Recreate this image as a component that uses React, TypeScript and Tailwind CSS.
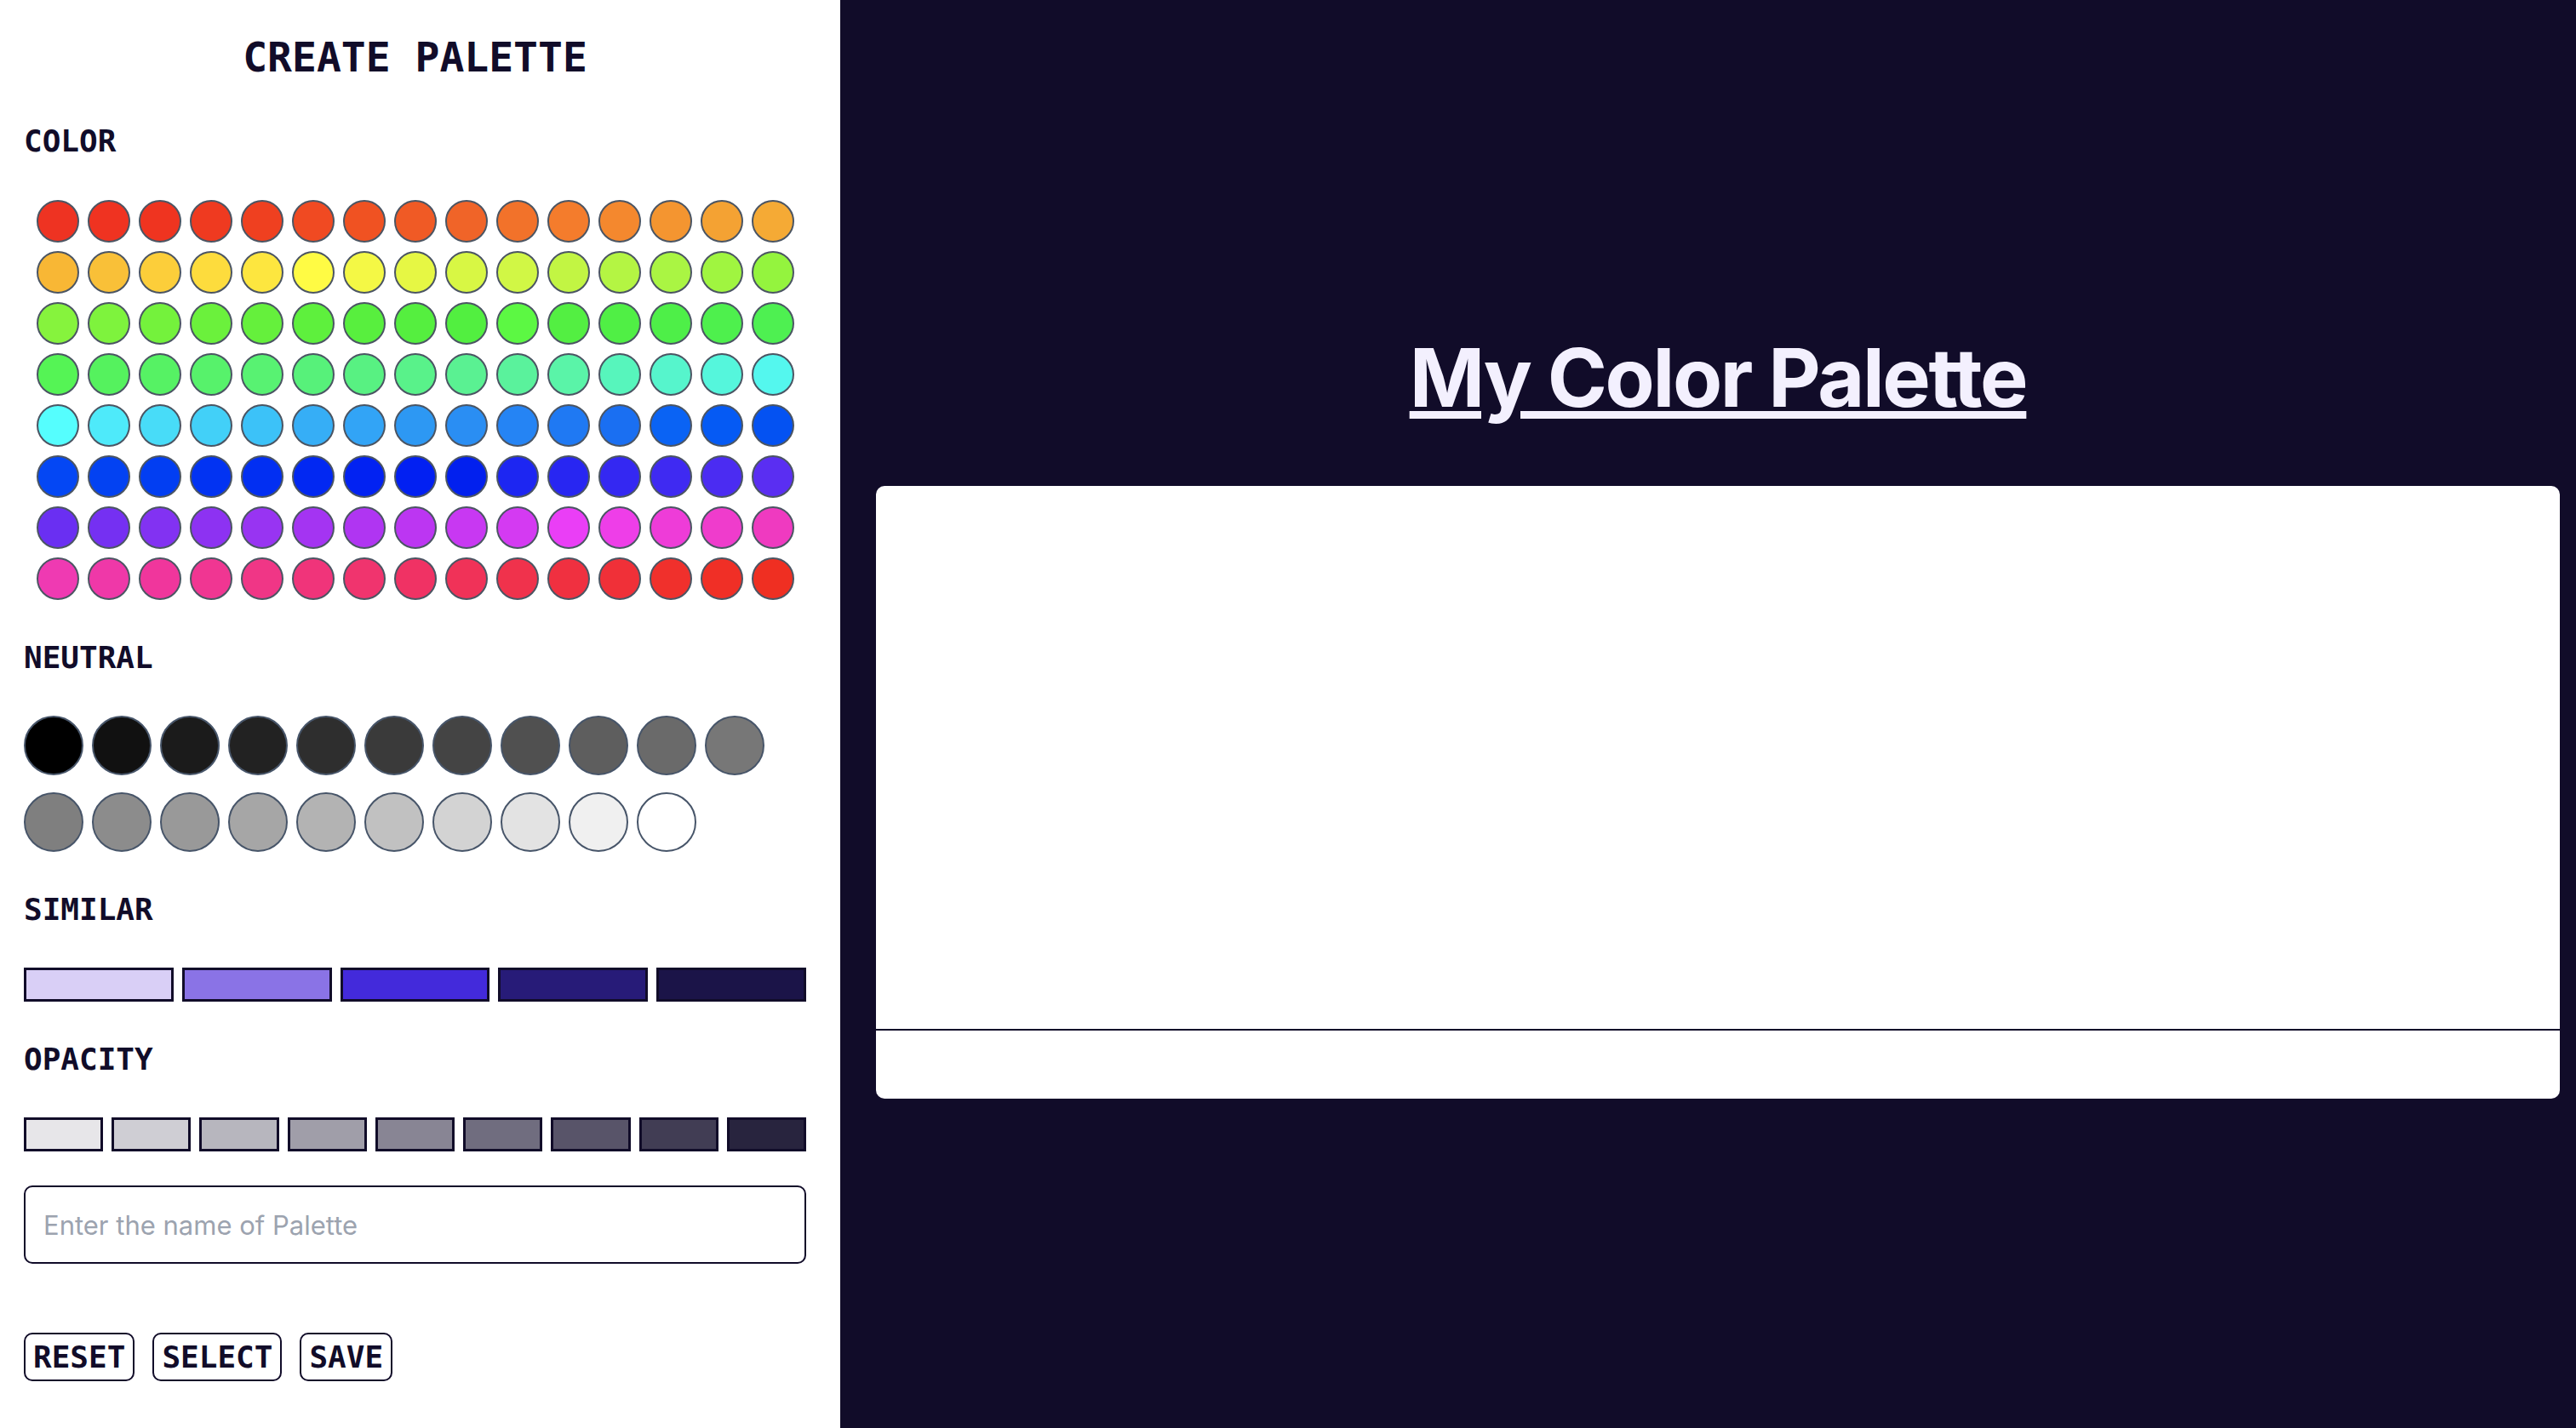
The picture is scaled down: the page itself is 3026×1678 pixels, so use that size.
const hues = [
  "#ee3322", "#ef3321", "#ef3420", "#ef3a20", "#ef4020", "#f04a22", "#f05222", "#f05a25", "#f06428", "#f2722a", "#f47c2c", "#f4882e", "#f49530", "#f4a233", "#f5aa35",
  "#f8b735", "#f9c038", "#fcce3a", "#fddc3d", "#fde63f", "#fffb44", "#f4f845", "#e6f744", "#d8f744", "#d1f745", "#c2f543", "#b4f543", "#aaf543", "#a0f540", "#94f43e",
  "#86f33d", "#7ef33d", "#74f23c", "#6bf13c", "#65f03c", "#5ef03d", "#58ef3e", "#55ef3f", "#52ef40", "#5cf843", "#53ef42", "#50ef45", "#4eef48", "#4ef04d", "#4ef051",
  "#55f455", "#55f25e", "#56f264", "#57f26b", "#58f272", "#57f17a", "#58f182", "#59f28a", "#5af192", "#5af29c", "#5af4a8", "#57f5bc", "#56f5cc", "#55f6dc", "#54f7ee",
  "#55fefe", "#4eeafa", "#48dcf8", "#42d0f8", "#3cc2f8", "#36aef6", "#32a4f6", "#2d98f3", "#2a8ef3", "#2584f4", "#1f79f3", "#1a6ff2", "#0a63f4", "#055af4", "#0452f2",
  "#0447f4", "#0342f2", "#023ef2", "#0233f2", "#022ff2", "#0228f2", "#0222f2", "#0220f2", "#0220ee", "#1d26f2", "#2826f2", "#3428f2", "#3f2af2", "#4b2cf2", "#5a2ef2",
  "#6a2ff2", "#7530f2", "#8232f2", "#8d32f2", "#9834f2", "#a434f2", "#b035f2", "#bc36f2", "#c838f2", "#d43af2", "#ea3ef6", "#ee3ee8", "#ee3cd8", "#ef3ccc", "#ef3ac0",
  "#ef3ab2", "#ef38a8", "#f0369c", "#f03692", "#f03686", "#f0347a", "#f0346e", "#f03264", "#f03258", "#f0324c", "#f03040", "#f03038", "#f0302c", "#f02f26", "#ef2f22",
];

const neutrals = [
  "#000000", "#111111", "#1b1b1b", "#222222", "#2e2e2e", "#3a3a3a", "#444444", "#505050", "#5e5e5e", "#6a6a6a", "#777777",
  "#7f7f7f", "#8c8c8c", "#999999", "#a6a6a6", "#b3b3b3", "#c1c1c1", "#d3d3d3", "#e3e3e3", "#f0f0f0", "#ffffff",
];

const similar = ["#d9cff6", "#8a73e6", "#432adb", "#271b78", "#1b1448"];

const opacities = [0.1, 0.2, 0.3, 0.4, 0.5, 0.6, 0.7, 0.8, 0.9];

const Label = ({ children }: { children: React.ReactNode }) => (
  <h2 className="mt-[47px] text-[36px] leading-[42px] font-bold text-[#110c29] font-['DejaVu_Sans_Mono',monospace]">
    {children}
  </h2>
);

const Btn = ({ children }: { children: React.ReactNode }) => (
  <button className="h-[57px] px-[9px] border-2 border-[#110c29] rounded-[10px] bg-white text-[36px] leading-[42px] font-bold text-[#110c29] font-['DejaVu_Sans_Mono',monospace]">
    {children}
  </button>
);

export default function App() {
  return (
    <div className="flex w-full min-h-[1678px] bg-[#110c29]">
      {/* left: palette builder */}
      <aside className="w-[987px] shrink-0 bg-white pl-[28px] pr-[40px] pt-[39px]">
        <h1 className="text-center text-[48px] leading-[56px] font-bold text-[#110c29] font-['DejaVu_Sans_Mono',monospace]">
          CREATE PALETTE
        </h1>

        <h2 className="mt-[50px] text-[36px] leading-[42px] font-bold text-[#110c29] font-['DejaVu_Sans_Mono',monospace]">COLOR</h2>
        <div className="mt-[48px] mx-auto w-[890px] grid grid-cols-[repeat(15,50px)] gap-[10px]">
          {hues.map((c, i) => (
            <div key={i} className="w-[50px] h-[50px] rounded-full border-2 border-[#4b5563]" style={{ backgroundColor: c }} />
          ))}
        </div>

        <Label>NEUTRAL</Label>
        <div className="mt-[47px] flex flex-wrap gap-x-[10px] gap-y-[20px]">
          {neutrals.map((c, i) => (
            <div key={i} className="w-[70px] h-[70px] rounded-full border-2 border-[#475569]" style={{ backgroundColor: c }} />
          ))}
        </div>

        <Label>SIMILAR</Label>
        <div className="mt-[47px] grid grid-cols-5 gap-[10px]">
          {similar.map((c, i) => (
            <div key={i} className="h-[40px] border-[3px] border-[#110c29]" style={{ backgroundColor: c }} />
          ))}
        </div>

        <Label>OPACITY</Label>
        <div className="mt-[47px] grid grid-cols-9 gap-[10px]">
          {opacities.map((o, i) => (
            <div key={i} className="h-[40px] border-[3px] border-[#110c29]" style={{ backgroundColor: `rgba(17,12,41,${o})` }} />
          ))}
        </div>

        <input
          type="text"
          placeholder="Enter the name of Palette"
          className="mt-[40px] w-full h-[92px] px-[21px] border-2 border-[#110c29] rounded-[10px] text-[31px] text-[#110c29] placeholder:text-[#9ca3af] font-['Inter',sans-serif] outline-none"
        />

        <div className="mt-[81px] flex gap-[21px] pb-[57px]">
          <Btn>RESET</Btn>
          <Btn>SELECT</Btn>
          <Btn>SAVE</Btn>
        </div>
      </aside>

      {/* right: preview */}
      <main className="flex-1 pl-[42px] pr-[19px] pt-[396px]">
        <h1 className="text-center text-[95px] leading-[95px] font-bold tracking-[-0.025em] underline text-[#f3f0fe] font-['Inter',sans-serif]">
          My Color Palette
        </h1>
        <div className="mt-[80px] bg-white rounded-[10px] overflow-hidden">
          <div className="h-[640px] border-b-2 border-[#110c29]" />
          <div className="h-[80px]" />
        </div>
      </main>
    </div>
  );
}
